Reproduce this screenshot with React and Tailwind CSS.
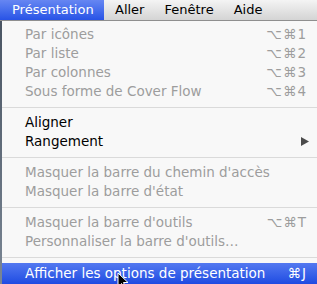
import React from 'react';

const font = { fontFamily: '"Lucida Grande", "DejaVu Sans", sans-serif' };

const groups = [
  [
    { label: 'Par icônes', keys: '⌥⌘1', disabled: true },
    { label: 'Par liste', keys: '⌥⌘2', disabled: true },
    { label: 'Par colonnes', keys: '⌥⌘3', disabled: true },
    { label: 'Sous forme de Cover Flow', keys: '⌥⌘4', disabled: true },
  ],
  [
    { label: 'Aligner' },
    { label: 'Rangement', submenu: true },
  ],
  [
    { label: "Masquer la barre du chemin d'accès", disabled: true },
    { label: "Masquer la barre d'état", disabled: true },
  ],
  [
    { label: "Masquer la barre d'outils", keys: '⌥⌘T', disabled: true },
    { label: "Personnaliser la barre d'outils…", disabled: true },
  ],
];

const MenuRow = ({ item }) => (
  <div
    className={`flex h-[19px] items-center justify-between pl-[23px] pr-[10px] ${
      item.disabled ? 'text-[#9d9d9d]' : 'text-black'
    }`}
  >
    <span>{item.label}</span>
    {item.keys && <span className="tracking-[1px]">{item.keys}</span>}
    {item.submenu && (
      <svg width="8" height="9" viewBox="0 0 8 9" className="mr-[-2px]">
        <path d="M0 0 L8 4.5 L0 9 Z" fill="#4b4b4b" />
      </svg>
    )}
  </div>
);

const Separator = () => (
  <div className="flex h-[12px] items-center">
    <div className="h-px w-full bg-[#dadada]" />
  </div>
);

const Cursor = () => (
  <svg width="12" height="18" viewBox="0 0 12 18" className="absolute left-[115px] top-[9px]">
    <path d="M1 1 L1 15 L4.5 11.5 L7 17 L9 16 L6.5 10.5 L11 10.5 Z" fill="#000" stroke="#fff" strokeWidth="1" />
  </svg>
);

export default function App() {
  return (
    <div className="flex h-[284px] w-[317px] flex-col overflow-hidden bg-[#5d6b7a] text-[13px]" style={font}>
      {/* Menu bar */}
      <div className="flex h-[21px] items-center border-b border-[#8f8f8f] bg-gradient-to-b from-[#f4f4f4] to-[#d4d4d4] text-black">
        <div className="flex h-full w-[104px] items-center bg-gradient-to-b from-[#6686f2] to-[#2852e6] pl-[12px] text-white">
          Présentation
        </div>
        <span className="ml-[11px]">Aller</span>
        <span className="ml-[20px]">Fenêtre</span>
        <span className="ml-[20px]">Aide</span>
      </div>

      <div className="flex flex-1">
        <div className="w-[2px] bg-gradient-to-b from-[#4a5563] to-[#7a8694]" />
        <div className="flex flex-1 flex-col bg-[#f8f8f8] pt-[4px] text-[13.5px]">
          {groups.map((group, gi) => (
            <React.Fragment key={gi}>
              {group.map((item) => (
                <MenuRow key={item.label} item={item} />
              ))}
              <Separator />
            </React.Fragment>
          ))}
          <div className="relative flex h-[21px] items-center justify-between bg-gradient-to-b from-[#5378f0] to-[#1f4ae2] pl-[23px] pr-[10px] text-white">
            <span>Afficher les options de présentation</span>
            <span className="tracking-[1px]">⌘J</span>
            <Cursor />
          </div>
        </div>
      </div>
    </div>
  );
}
